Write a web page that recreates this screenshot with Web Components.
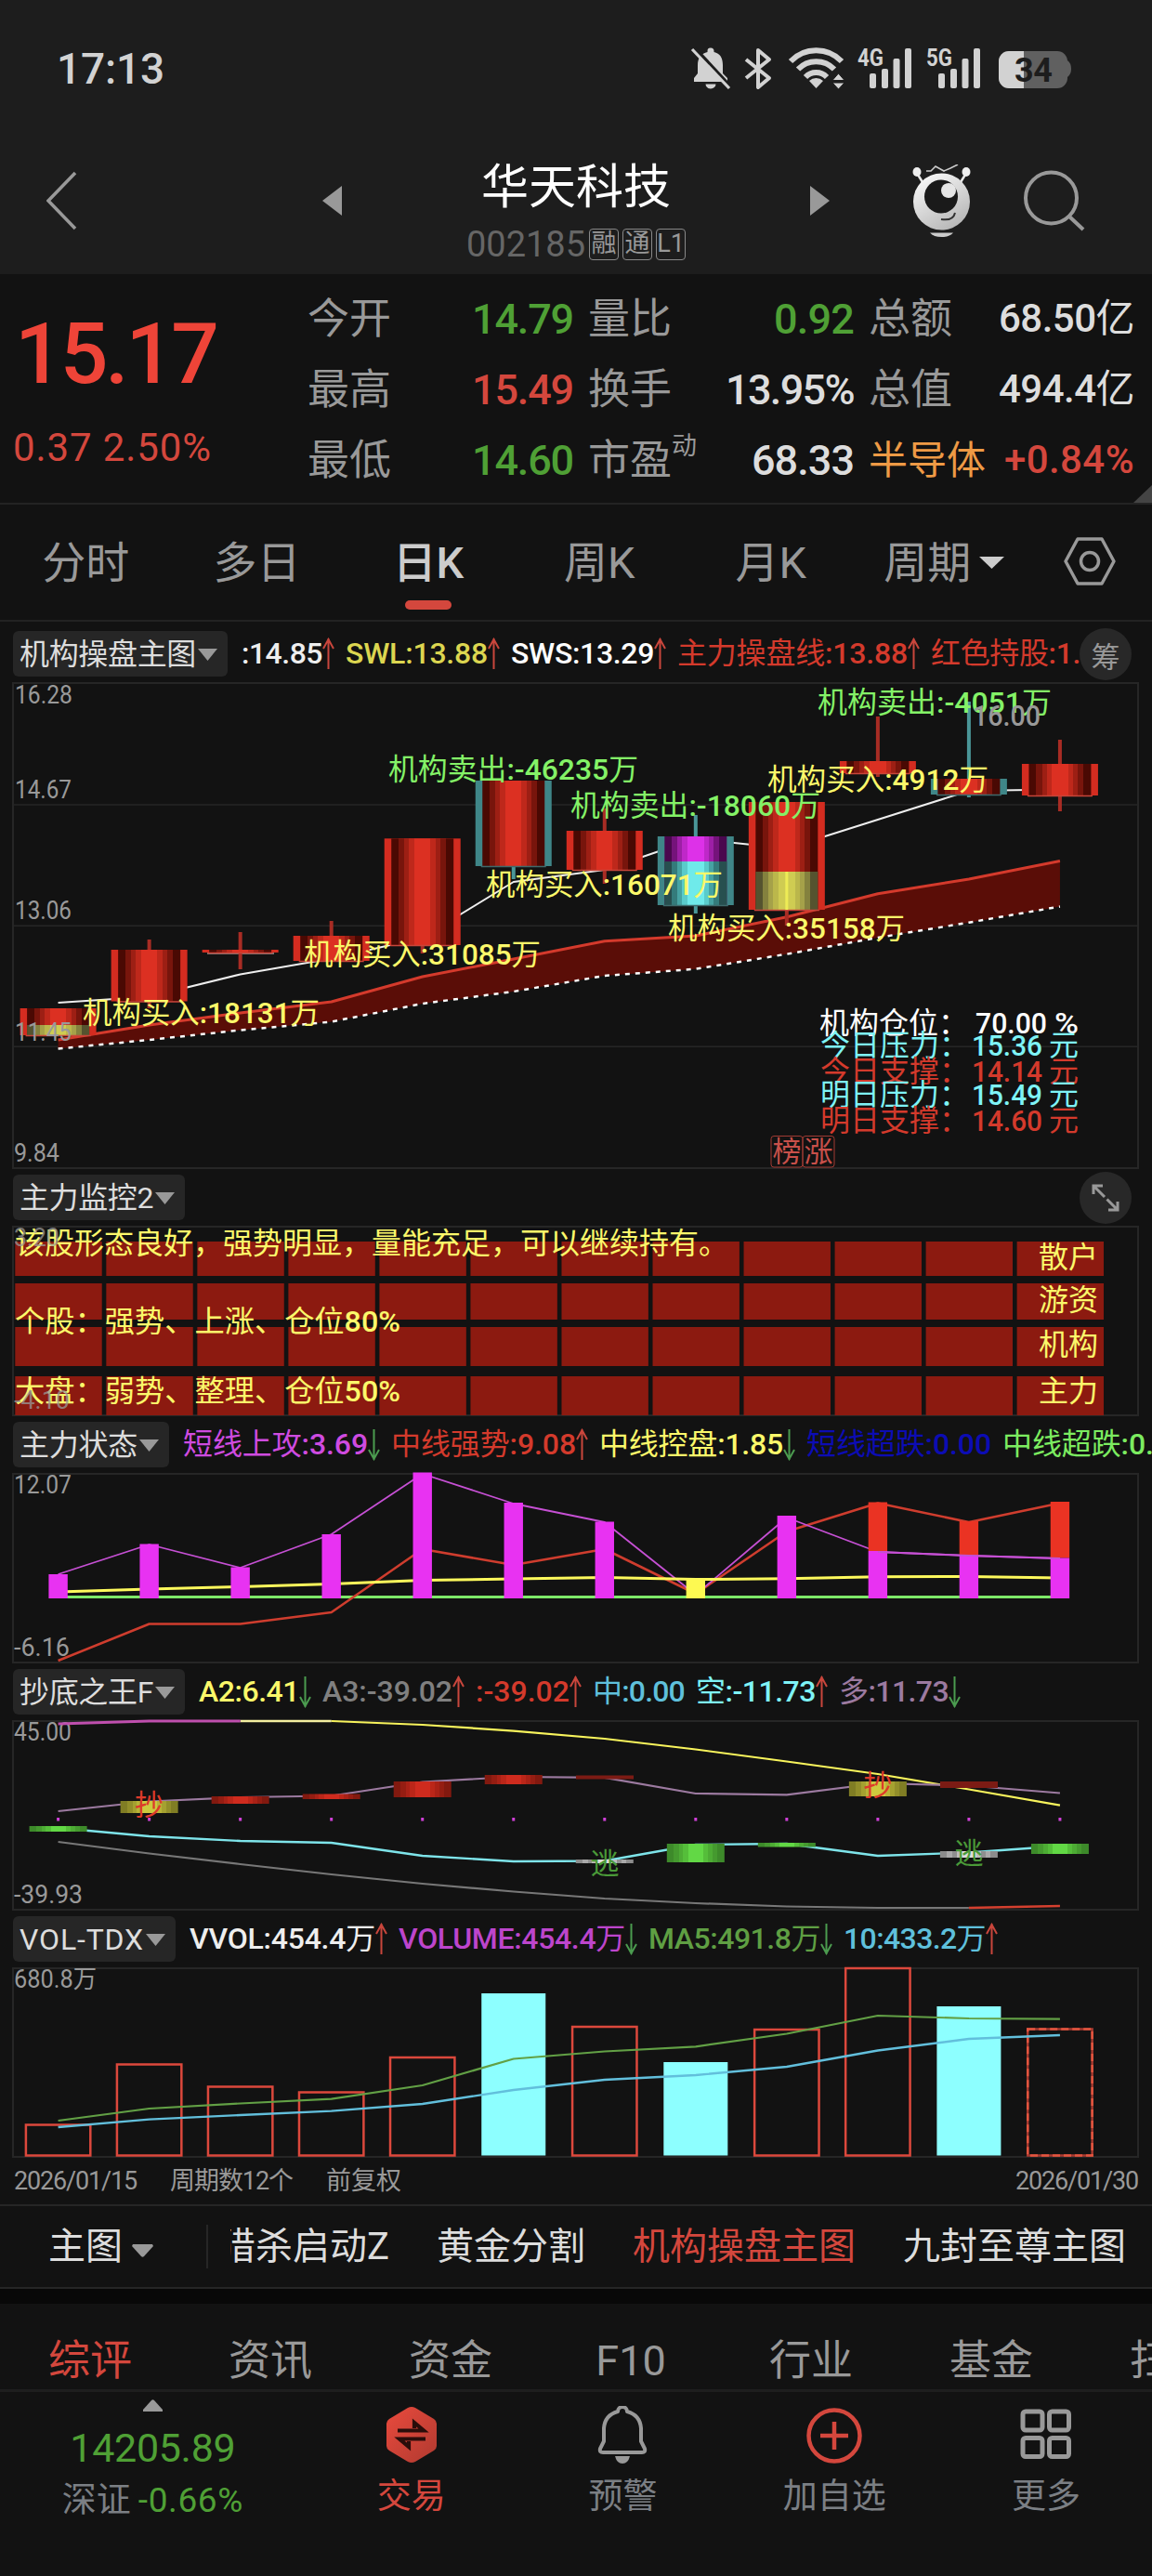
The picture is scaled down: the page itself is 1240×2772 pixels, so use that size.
<!DOCTYPE html>
<html lang="zh-CN">
<head>
<meta charset="utf-8">
<title>华天科技 002185</title>
<style>
    body {
        margin: 0;
        background: #121212;
        color: #ddd;
        font-family: Roboto, "Noto Sans CJK SC", sans-serif;
    }
</style>
</head>
<body>
<stock-app></stock-app>

<script>
const UP = "#d4473d";
const DOWN = "#4fa035";
const COL_X = Array.from({ length: 12 }, (_, i) => 62.6 + i * 98.03);

// ---------- text and svg helpers ----------
const HAN = /[\u3000-\u9fff\uff00-\uffef]+/g;
// digits are medium, Chinese runs stay regular
const light = (text, tag) => text.replace(HAN, s => `<${tag} style="font-weight:400">${s}</${tag}>`);
const rect = (x, y, w, h, fill, extra = "") =>
    `<rect x="${x}" y="${y}" width="${w}" height="${h}" fill="${fill}" ${extra}/>`;
const seg = (x1, y1, x2, y2, color, w = 1, extra = "") =>
    `<line x1="${x1}" y1="${y1}" x2="${x2}" y2="${y2}" stroke="${color}" stroke-width="${w}" ${extra}/>`;
const label = (x, y, text, color, size = 32, w = 0, weight = 500) =>
    `<text x="${x}" y="${y}" fill="${color}" font-size="${size}" font-weight="${weight}" ${w ? `textLength="${w}" lengthAdjust="spacingAndGlyphs"` : ""}>${light(text, "tspan")}</text>`;
const axis = (x, y, text, w) => label(x, y, text, "#999", 27, w, 400);
const path = (ys, color, w, extra = "", from = 0) =>
    `<polyline fill="none" stroke="${color}" stroke-width="${w}" stroke-linejoin="round" points="${ys.map((y, i) => `${COL_X[i + from]},${y}`).join(" ")}" ${extra}/>`;

// stepped gradient, dark at both edges and bright in the middle
function stepped(id, colors) {
    const cuts = [0, .12, .21, .285, .37, .63, .715, .79, .88, 1];
    const order = [0, 1, 2, 3, 4, 3, 2, 1, 0];
    const stops = order.map((c, i) =>
        `<stop offset="${cuts[i]}" stop-color="${colors[c]}"/><stop offset="${cuts[i + 1]}" stop-color="${colors[c]}"/>`);
    return `<linearGradient id="${id}">${stops.join("")}</linearGradient>`;
}

// ---------- text that fills a given width ----------
class FitText extends HTMLElement {
    constructor() {
        super();
        this.shadowDOM = this.attachShadow({mode:"open"});
    }
    connectedCallback() {
        this.shadowDOM.innerHTML = `
        <style>
        :host { display: inline-block; white-space: nowrap; }
        </style><span><slot></slot></span>`;
        const want = Number(this.getAttribute("w"));
        const span = this.shadowDOM.querySelector("span");
        const n = this.textContent.length;
        const have = span.getBoundingClientRect().width;
        if (want && have) {
            span.style.letterSpacing = ((want - have) / n).toFixed(3) + "px";
            this.style.width = want + "px";
        }
    }
}

// ---------- status bar ----------
class StatusBar extends HTMLElement {
    constructor() {
        super();
        this.shadowDOM = this.attachShadow({mode:"open"});
    }
    signal(kind) {
        return `<svg width="59" height="44" viewBox="0 0 59 44" fill="#d2d2d2">
            <text x="0" y="19" font-size="26" font-weight="700" textLength="28" lengthAdjust="spacingAndGlyphs">${kind}</text>
            <rect x="13" y="27" width="7" height="16" rx="2"/><rect x="26" y="22" width="7" height="21" rx="2"/>
            <rect x="38.500" y="11" width="7" height="32" rx="2"/><rect x="51" y="0" width="7" height="43" rx="2"/>
        </svg>`;
    }
    connectedCallback() {
        this.shadowDOM.innerHTML = `
        <style>
        :host { display: flex; align-items: center; height: 148px; box-sizing: border-box; padding: 0 87px 0 61px; }
        .time { flex: 1; font-size: 46px; font-weight: 500; color: #d2d2d2; }
        .icons { display: flex; }
        svg { display: block; overflow: visible; }
        </style>
        <div class="time"><fit-text w="116">17:13</fit-text></div>
        <div class="icons">
            <svg width="42" height="44" viewBox="0 0 42 44" fill="#d2d2d2" style="margin-right:15px">
                <path d="M3 36v-4l4-5V18C7 10 11 5.500 17.500 4V3a3.500 3.500 0 0 1 7 0v1C31 5.500 34 10 34 18v9l5 5v4z"/>
                <path d="M15.500 38.500h11a5.500 5 0 0 1-11 0z"/>
                <path d="M4 0 43 42" stroke="#1d1d1d" stroke-width="4"/>
                <path d="M1 1 41 43" stroke="#d2d2d2" stroke-width="3.200"/>
            </svg>
            <svg width="30" height="44" viewBox="0 0 30 44" fill="none" stroke="#d2d2d2" stroke-width="4" stroke-linejoin="round" style="margin-right:18px">
                <path d="M2 12 27 32 15 42V2l12 10L2 32"/>
            </svg>
            <svg width="60" height="44" viewBox="0 0 60 44" fill="none" stroke="#d2d2d2" stroke-width="6" style="margin-right:14px">
                <path d="M2 14a38 38 0 0 1 55 0M10 22.500a27 27 0 0 1 39 0M18 31a16 16 0 0 1 23 0"/>
                <path d="M29.500 43 22 35a11 11 0 0 1 15 0z" fill="#d2d2d2" stroke="none"/>
                <path d="M47 34.500h13L53.500 27zM47 37h13l-6.500 7z" fill="#d2d2d2" stroke="#1d1d1d" stroke-width="1"/>
            </svg>
            <div style="margin-right:15px">${this.signal("4G")}</div>
            <div style="margin-right:18px">${this.signal("5G")}</div>
            <svg width="79" height="44" viewBox="0 0 79 44">
                <path d="M75 13q4 3 4 9t-4 9z" fill="#606060"/>
                <rect x="1" y="3" width="74" height="40" rx="11" fill="#606060"/>
                <path d="M12 3h16v40H12A11 11 0 0 1 1 32V14A11 11 0 0 1 12 3z" fill="#d2d2d2"/>
                <text x="18" y="36" font-size="36" font-weight="700" fill="#1d1d1d" textLength="41">34</text>
            </svg>
        </div>`;
    }
}

// ---------- title bar ----------
class StockHeader extends HTMLElement {
    constructor() {
        super();
        this.shadowDOM = this.attachShadow({mode:"open"});
    }
    connectedCallback() {
        this.shadowDOM.innerHTML = `
        <style>
        :host { display: flex; align-items: center; height: 147px; }
        svg { display: block; flex: none; margin-top: -11px; }
        .name { width: 504px; text-align: center; align-self: flex-start; margin-top: 26px; }
        .title { font-size: 51px; line-height: 56px; color: #fff; }
        .code { display: flex; justify-content: center; align-items: center; gap: 4px; height: 34px; margin-top: 16px; font-size: 38px; color: #666; }
        .tag { box-sizing: border-box; width: 32px; height: 34px; border: 1px solid #888; border-radius: 4px; font-size: 27px; line-height: 31px; color: #999; }
        </style>
        <svg style="margin-left:50px" width="33" height="64" viewBox="0 0 33 64"><path d="M31 2 2 32l29 30" fill="none" stroke="#999" stroke-width="3.500"/></svg>
        <svg style="margin-left:264px" width="21" height="34" viewBox="0 0 21 34"><path d="M21 1v32L0 17z" fill="#999"/></svg>
        <div class="name">
            <div class="title">华天科技</div>
            <div class="code"><fit-text w="128">002185</fit-text><span class="tag">融</span><span class="tag">通</span><span class="tag">L1</span></div>
        </div>
        <svg width="21" height="34" viewBox="0 0 21 34"><path d="M0 1v32l21-16z" fill="#999"/></svg>
        <svg style="margin-left:89px" width="63" height="78" viewBox="0 0 63 78">
            <defs><linearGradient id="m" x1="0" y1="0" x2=".6" y2="1"><stop offset="0" stop-color="#fff"/><stop offset="1" stop-color="#b9b9b9"/></linearGradient></defs>
            <path d="M6 11 11 19M57 11 52 19" stroke="#e8e8e8" stroke-width="2.500"/>
            <ellipse cx="5" cy="8" rx="4.500" ry="5" fill="#eee"/><ellipse cx="58" cy="8" rx="4.500" ry="5" fill="#eee"/>
            <path d="M15 7h5l5-5 9 5 7-3 8-4" fill="none" stroke="#ccc" stroke-width="1.600"/>
            <circle cx="31.500" cy="40" r="30.500" fill="url(#m)"/>
            <ellipse cx="31" cy="34.500" rx="18" ry="18" fill="#1a1a1a"/>
            <ellipse cx="39" cy="28" rx="8" ry="8" fill="#e6e6e6"/>
            <path d="M31 59q13 2 15-7" fill="none" stroke="#333" stroke-width="2"/>
            <path d="M19 73.500h25q-4 4.500-12.500 4.500T19 73.500z" fill="#ccc"/>
        </svg>
        <svg style="margin-left:57px" width="66" height="66" viewBox="0 0 66 66" fill="none" stroke="#999" stroke-width="4"><circle cx="29.500" cy="30" r="27.500"/><path d="M49 50 64 64"/></svg>`;
    }
}

// ---------- quote block ----------
class QuoteGroup extends HTMLElement {
    constructor() {
        super();
        this.shadowDOM = this.attachShadow({mode:"open"});
    }
    set rows(rows) {
        this.shadowDOM.innerHTML = `
        <style>
        :host { display: grid; grid-auto-rows: 76px; width: 286px; }
        div { display: flex; justify-content: space-between; align-items: center; line-height: 76px; white-space: nowrap; }
        .k { font-size: 45px; color: #999; }
        .v { font-size: 45px; font-weight: 500; }
        sup { font-size: 27px; line-height: 1; vertical-align: 22px; }
        </style>
        ${rows.map(([k, v, color, w, style]) => `
        <div><span class="k" style="${style || ""}">${k}</span><fit-text class="v" w="${w}" style="color:${color};${this.hasAttribute("small") ? "font-size:42px;margin-top:-3px" : ""}">${light(v, "span")}</fit-text></div>`).join("")}`;
    }
}

class QuoteBoard extends HTMLElement {
    constructor() {
        super();
        this.shadowDOM = this.attachShadow({mode:"open"});
    }
    connectedCallback() {
        this.shadowDOM.innerHTML = `
        <style>
        :host { display: flex; position: relative; height: 235px; padding-top: 11px; border-bottom: 2px solid #232323; }
        .last { width: 331px; color: #ee4438; }
        .price { font-size: 91px; font-weight: 500; line-height: 100px; padding: 25px 0 0 16px; }
        .chg { font-size: 42px; line-height: 50px; padding: 26px 0 0 14px; color: ${UP}; }
        quote-group + quote-group { margin-left: 16px; }
        .corner { position: absolute; right: 0; bottom: 0; width: 20px; height: 19px; background: #444; clip-path: polygon(100% 0, 100% 100%, 0 100%); }
        </style>
        <div class="last">
            <div class="price"><fit-text w="217">15.17</fit-text></div>
            <div class="chg"><fit-text w="214">0.37 2.50%</fit-text></div>
        </div>
        <quote-group></quote-group><quote-group></quote-group><quote-group small></quote-group>
        <div class="corner"></div>`;
        const [a, b, c] = this.shadowDOM.querySelectorAll("quote-group");
        a.rows = [["今开", "14.79", DOWN, 109], ["最高", "15.49", UP, 109], ["最低", "14.60", DOWN, 109]];
        b.rows = [["量比", "0.92", DOWN, 86], ["换手", "13.95%", "#ddd", 138], ["市盈<sup>动</sup>", "68.33", "#ddd", 110]];
        c.rows = [["总额", "68.50亿", "#ddd", 146], ["总值", "494.4亿", "#ddd", 146], ["半导体", "+0.84%", UP, 140, "color:#ee9a45;font-size:42px"]];
    }
}

// ---------- period tabs ----------
class PeriodTabs extends HTMLElement {
    constructor() {
        super();
        this.shadowDOM = this.attachShadow({mode:"open"});
    }
    connectedCallback() {
        this.shadowDOM.innerHTML = `
        <style>
        :host { display: flex; height: 124px; border-bottom: 2px solid #232323; font-size: 47px; color: #999; }
        .tab { width: 184.400px; height: 124px; display: flex; flex-direction: column; align-items: center; line-height: 125px; white-space: nowrap; }
        .on { color: #ccc; font-weight: 500; }
        .on::after { content: ""; width: 50px; height: 10px; border-radius: 5px; background: ${UP}; margin-top: -22px; flex: none; }
        .more { flex-direction: row; justify-content: center; gap: 9px; padding-left: 2px; }
        svg { display: block; }
        .cfg { margin: 35px 0 0 37px; }
        </style>
        <div class="tab">分时</div><div class="tab">多日</div><div class="tab on">日K</div><div class="tab">周K</div><div class="tab">月K</div>
        <div class="tab more">周期<svg width="27" height="13" viewBox="0 0 27 13"><path d="M0 0h27L13.500 13z" fill="#ccc"/></svg></div>
        <svg class="cfg" width="56" height="52" viewBox="0 0 56 52" fill="none" stroke="#999" stroke-width="3.500"><path d="M15 2h26l13 24-13 24H15L2 26z" stroke-linejoin="round"/><circle cx="28" cy="26" r="9.500"/></svg>`;
    }
}

// ---------- indicator panels ----------
class LegendItem extends HTMLElement {
    constructor() {
        super();
        this.shadowDOM = this.attachShadow({mode:"open"});
    }
    connectedCallback() {
        const dir = this.getAttribute("dir");
        const up = `<path d="M6.500 1v33M1 12 6.500 2 12 12" stroke="#c9463c"/>`;
        const down = `<path d="M6.500 1v33M1 23l5.500 10L12 23" stroke="#4b9b4f"/>`;
        this.shadowDOM.innerHTML = `
        <style>
        :host { display: flex; flex: none; align-items: center; color: ${this.getAttribute("color")}; font-size: 32px; font-weight: 500; line-height: 49px; margin-right: 12px; }
        svg { display: block; }
        </style>
        <fit-text w="${this.getAttribute("w")}">${light(this.getAttribute("text"), "span")}</fit-text>
        ${dir === "none" ? "" : `<svg width="13" height="35" viewBox="0 0 13 35" fill="none" stroke-width="2">${dir === "up" ? up : down}</svg>`}`;
    }
}

class IndicatorPanel extends HTMLElement {
    constructor() {
        super();
        this.shadowDOM = this.attachShadow({mode:"open"});
    }
    connectedCallback() {
        this.shadowDOM.innerHTML = `
        <style>
        :host { display: block; }
        .head { display: flex; align-items: center; height: 49px; margin: 0 0 7px 14px; overflow: hidden; }
        .pill { box-sizing: border-box; flex: none; width: ${this.getAttribute("pill")}px; height: 49px; margin-right: 15px; padding-left: 7px; display: flex; align-items: center; gap: 2px;
            border-radius: 6px; background: #262626; color: #ddd; font-size: 32px; line-height: 50px; white-space: nowrap; }
        svg { display: block; }
        </style>
        <div class="head">
            <div class="pill"><fit-text w="${this.getAttribute("tw")}">${this.getAttribute("name")}</fit-text><svg width="21" height="14" viewBox="0 0 21 14"><path d="M0 1h21L10.500 14z" fill="#999"/></svg></div>
            <slot name="legend"></slot>
        </div>
        <slot></slot>`;
    }
}

// Base for the plots: the viewBox keeps the page's vertical scale, one unit per pixel.
class PlotBase extends HTMLElement {
    constructor() {
        super();
        this.shadowDOM = this.attachShadow({mode:"open"});
    }
    connectedCallback() {
        const { top, height } = this;
        this.shadowDOM.innerHTML = `
        <style>
        :host { display: block; height: ${height}px; margin-bottom: 7px; }
        svg { display: block; overflow: visible; }
        </style>
        <svg width="1240" height="${height}" viewBox="0 ${top} 1240 ${height}">
            <rect x="14" y="${top}" width="1211" height="${height}" fill="none" stroke="#262626" stroke-width="2"/>
            ${this.draw()}
        </svg>`;
    }
}

class MainPlot extends PlotBase {
    get top() { return 735; }
    get height() { return 522; }
    candle(i, top, bottom, o) {
        const x = COL_X[i];
        const frame = o.teal ? "#3f8688" : "#d42c20";
        const wick = o.teal ? "#4a9698" : "#a82c24";
        let s = "";
        if (o.hi) s += seg(x, o.hi, x, top, wick, 4);
        if (o.lo) s += seg(x, bottom, x, o.lo, wick, 4);
        s += rect(x - 41, top, 82, bottom - top, frame);
        s += rect(x - 33.5, top, 67, bottom - top, `url(#${o.fill || "red"})`);
        if (o.split) s += rect(x - 33.5, o.split, 67, bottom - o.split, `url(#${o.fill2})`);
        s += seg(x - 35, bottom + .5, x + 35, bottom + .5, o.teal ? "#3f6a6b" : "#c8453a", 1.5);
        return s;
    }
    draw() {
        const red = [1119, 1103, 1090, 1078, 1051, 1032, 1012.7, 1007, 986.7, 961.7, 946, 926.5];
        const low = [1128.5, 1119, 1108.5, 1099.5, 1080, 1067, 1050, 1042.7, 1026.7, 1009, 992.7, 975.5];
        const area = red.map((y, i) => `${COL_X[i]},${y}`).concat(low.map((y, i) => `${COL_X[i]},${y}`).reverse()).join(" ");
        const G = "#84f267", Y = "#fbf86a", C = "#7ef3f6", R = "#d43a2c";
        const info = (y, k, v, u, c) => label(883, y, k, c) + label(1046, y, v, c, 32, 76) + label(1129, y, u, c);
        return `
        <defs>
            ${stepped("red", ["#4a0903", "#78150c", "#9d1f14", "#be281b", "#dc3022"])}
            ${stepped("yel", ["#55532f", "#84813e", "#a5a149", "#bbb74b", "#cfcc52"])}
            ${stepped("cya", ["#274f4f", "#347b7b", "#46a3a3", "#5acbcb", "#6feaea"])}
            ${stepped("mag", ["#4a084e", "#75137b", "#9d1fa6", "#bf28c9", "#dd31e8"])}
        </defs>
        ${[866, 996.3, 1126.3].map(y => seg(14, y, 1225, y, "#262626", 1.5)).join("")}
        <polygon points="${area}" fill="#5a0d07"/>
        ${path(low, "#fff", 2.5, 'stroke-dasharray="5 6"')}
        ${path([1079, 1072.5, 1048.5, 1031.5, 1009, 949, 936, 902.5, 913, 882, 851, 849.5], "#eee", 2)}
        ${path(red, "#d43a2c", 3)}
        ${this.candle(0, 1085, 1114, { split: 1103, fill2: "yel" })}
        ${this.candle(1, 1022, 1077.5, { hi: 1011, lo: 1085 })}
        ${seg(223, 1026, 295, 1026, "#999", 1.5)}
        ${this.candle(2, 1022, 1025, { hi: 1003, lo: 1043 })}
        ${this.candle(3, 1007, 1034, { hi: 991 })}
        ${this.candle(4, 902.3, 1017, { lo: 1026 })}
        ${this.candle(5, 840, 932, { teal: 1, lo: 946 })}
        ${this.candle(6, 894, 936, { hi: 870, lo: 951 })}
        ${this.candle(7, 900, 974, { teal: 1, hi: 877, lo: 983, fill: "mag", split: 927, fill2: "cya" })}
        ${this.candle(8, 863, 979, { lo: 996, split: 938, fill2: "yel" })}
        ${seg(COL_X[8], 938, COL_X[8], 979, "#eeec55", 3)}
        ${this.candle(9, 819, 832, { hi: 771, lo: 836 })}
        ${this.candle(10, 838, 855, { teal: 1, hi: 755, lo: 858 })}
        ${this.candle(11, 822, 856, { hi: 796, lo: 873 })}
        ${axis(16, 757, "16.28", 62)}${axis(16, 859, "14.67", 61)}${axis(16, 989, "13.06", 61)}${axis(16, 1120, "11.45", 61)}${axis(15, 1250, "9.84", 49)}
        ${label(418, 838.5, "机构卖出:-46235万", G, 32, 269)}
        ${label(880, 767, "机构卖出:-4051万", G, 32, 252)}
        ${label(614, 877.5, "机构卖出:-18060万", G, 32, 269)}
        ${label(826, 850, "机构买入:4912万", Y, 32, 238)}
        ${label(523, 963, "机构买入:16071万", Y, 32, 255)}
        ${label(719, 1010, "机构买入:35158万", Y, 32, 255)}
        ${label(327, 1037.7, "机构买入:31085万", Y, 32, 255)}
        ${label(89, 1100.7, "机构买入:18131万", Y, 32, 255)}
        ${label(1047, 781, "16.00", "#999", 32, 73)}
        ${label(882, 1112, "机构仓位：", "#fff")}${label(1050, 1112, "70.00", "#fff", 32, 77)}${label(1135, 1112, "%", "#fff", 32, 26)}
        ${info(1135.7, "今日压力：", "15.36", "元", C)}
        ${info(1163.7, "今日支撑：", "14.14", "元", R)}
        ${info(1189, "明日压力：", "15.49", "元", C)}
        ${info(1216.7, "明日支撑：", "14.60", "元", R)}
        <g fill="none" stroke="#a03a33"><rect x="830" y="1222.500" width="34" height="33.500" rx="3"/><rect x="864" y="1222.500" width="34" height="33.500" rx="3"/></g>
        ${label(831.5, 1250, "榜", "#c9504a", 31)}${label(865.5, 1250, "涨", "#c9504a", 31)}`;
    }
}

class WatchPlot extends PlotBase {
    get top() { return 1320; }
    get height() { return 203; }
    draw() {
        const Y = "#fbf86a";
        const rows = [[1336, 37], [1381, 39], [1428, 42], [1481, 42]];
        return `
        ${rows.map(([y, h]) => COL_X.map(x => rect(x - 46.3, y, 93.4, h, "#8c1a10")).join("")).join("")}
        ${label(16, 1348.5, "该股形态良好，强势明显，量能充足，可以继续持有。", Y)}
        ${label(16, 1433.3, "个股：强势、上涨、仓位80%", Y, 32, 415)}
        ${label(16, 1508, "大盘：弱势、整理、仓位50%", Y, 32, 415)}
        ${label(1118, 1364, "散户", Y)}${label(1118, 1409.5, "游资", Y)}${label(1118, 1458, "机构", Y)}${label(1118, 1507.5, "主力", Y)}
        <g opacity=".75">${axis(15, 1341, "3.20", 49)}${axis(15, 1515.6, "-4.10", 60)}</g>`;
    }
}

class StatePlot extends PlotBase {
    get top() { return 1586; }
    get height() { return 203; }
    draw() {
        const M = "#e832f2", base = 1720;
        const tops = [1694, 1661.5, 1686.5, 1651, 1584.5, 1617, 1637.5, 1699.5, 1631, 1669, 1673.5, 1676.5];
        const over = { 9: 1616.5, 10: 1637, 11: 1616 };
        return `
        ${axis(15, 1607, "12.07", 62)}${axis(15, 1782, "-6.16", 60)}
        ${seg(62, 1718.5, 1151, 1718.5, "#7ee868", 3)}
        ${path([1787, 1747.5, 1747.5, 1735, 1667, 1684, 1667, 1715, 1648, 1617.5, 1638, 1617.5], "#cf3d2e", 2.6)}
        ${path([1694, 1662, 1687, 1651, 1586, 1618, 1638, 1716, 1633, 1670, 1674, 1677], "#c650d4", 1.8)}
        ${path([1713, 1710, 1707.5, 1704.5, 1700.5, 1699, 1697.5, 1699.5, 1698.7, 1696.8, 1696.5, 1698], "#fdf95c", 3)}
        ${tops.map((y, i) => (over[i] ? rect(COL_X[i] - 10.2, over[i], 20.4, y - over[i], "#ea3323") : "") +
            rect(COL_X[i] - 10.2, y, 20.4, base - y, i === 7 ? "#fdf951" : M)).join("")}
        ${path([1670, 1674, 1677], "#c650d4", 2, "", 9)}`;
    }
}

class BottomPlot extends PlotBase {
    get top() { return 1852; }
    get height() { return 203; }
    draw() {
        const bar = (i, top, bottom, fill) => rect(COL_X[i] - 31, top, 62, bottom - top, `url(#${fill})`);
        return `
        <defs>
            ${stepped("r", ["#82190f", "#951d12", "#a92116", "#bb2619", "#cf2b1e"])}
            ${stepped("y", ["#807d24", "#928e2a", "#a5a130", "#b8b437", "#cdc93e"])}
            ${stepped("g", ["#3d8a2a", "#459a2f", "#4dac34", "#55be3a", "#62d845"])}
            ${stepped("w", ["#8c8c8c", "#a9a9a9", "#8f8f8f", "#bdbdbd", "#dcdcdc"])}
        </defs>
        ${axis(15, 1873, "45.00", 62)}${axis(15, 2048, "-39.93", 74)}
        ${path([1852, 1852, 1856, 1862.6, 1871, 1882.5, 1895.5, 1909, 1925.5, 1942.6].slice(1), "#f8f45c", 2.2, "", 3)}
        ${seg(COL_X[2], 1852, COL_X[3], 1852, "#f4efa0", 2.6)}
        ${path([1855, 1852, 1852], "#bf4fae", 2.8)}
        ${path([1949, 1938.5, 1934, 1932.5, 1917.5, 1912, 1912.8, 1930, 1931.3, 1919, 1921.5, 1929.5], "#9c7aa0", 2.2)}
        ${path([1967, 1976, 1981, 1983, 1997, 2003, 2002.5, 1985, 1984, 1997, 1993.5, 1986.5], "#7ee4ea", 2.4)}
        ${path([1982, 1994.5, 2006, 2017, 2027, 2035.5, 2043, 2048, 2051.5, 2053, 2053], "#777", 2.2)}
        ${path([2053, 2051], "#d4402f", 2.4, "", 10)}
        ${COL_X.map(x => rect(x - 1.5, 1956, 3, 3.5, "#d040d8")).join("")}
        ${bar(1, 1938, 1951, "y")}${bar(2, 1933, 1941, "r")}${bar(3, 1930.5, 1936, "r")}${bar(4, 1917, 1934, "r")}${bar(5, 1910, 1920, "r")}
        ${rect(620, 1910.5, 62, 4, "#7c1b14")}${bar(9, 1917, 1933, "y")}${rect(1012, 1917, 62, 7, "#7c1b14")}
        ${bar(0, 1965, 1971, "g")}${bar(7, 1984, 2004, "g")}${bar(8, 1983, 1987.5, "g")}${bar(11, 1984, 1995, "g")}
        ${bar(6, 2001, 2005, "w")}${bar(10, 1992, 1999, "w")}
        ${label(145, 1953, "抄", "#dd3a2a", 31)}${label(929.5, 1932, "抄", "#dd3a2a", 31)}
        ${label(635.5, 2016, "逃", "#4a9a38", 31)}${label(1027.5, 2005, "逃", "#4a9a38", 31)}`;
    }
}

class VolumePlot extends PlotBase {
    get top() { return 2118; }
    get height() { return 203; }
    draw() {
        const tops = [2286.5, 2221.5, 2245.5, 2251.5, 2214, 2145, 2181, 2219, 2184, 2118, 2159, 2183.5];
        const bars = tops.map((y, i) => {
            const x = COL_X[i];
            if ([5, 7, 10].includes(i)) return rect(x - 34.5, y, 69, 2319.5 - y, "#8dffff");
            const box = extra => rect(x - 34.7, y, 69.4, 2319.5 - y, "none", `stroke-width="2.500" ${extra}`);
            // the running day is drawn with a faint dash over its outline
            return i === 11 ? box('stroke="#a83a30"') + box('stroke="#e2553f" stroke-dasharray="8 4"') : box('stroke="#dc483c"');
        });
        return `
        ${axis(15, 2139, "680.8万", 89)}
        ${bars.join("")}
        ${path([2282, 2269, 2263.5, 2258.6, 2244, 2215.5, 2207.5, 2202.3, 2188.5, 2169, 2172, 2172.6], "#62a045", 2.2)}
        ${path([2289, 2280.6, 2276, 2271.6, 2264, 2249, 2238, 2233, 2224, 2206.5, 2194, 2190], "#62bfdc", 2.4)}`;
    }
}

// round button lying over a panel's header row
class RoundButton extends HTMLElement {
    constructor() {
        super();
        this.shadowDOM = this.attachShadow({mode:"open"});
    }
    connectedCallback() {
        this.shadowDOM.innerHTML = `
        <style>
        :host { position: absolute; right: 22px; width: 56px; height: 56px; border-radius: 50%; background: #282828; display: flex; align-items: center; justify-content: center; color: #999; font-size: 31px; }
        </style><slot></slot>`;
    }
}

// ---------- bottom strips ----------
class IndicatorStrip extends HTMLElement {
    constructor() {
        super();
        this.shadowDOM = this.attachShadow({mode:"open"});
    }
    connectedCallback() {
        this.shadowDOM.innerHTML = `
        <style>
        :host { display: flex; align-items: center; height: 87px; border-top: 2px solid #262626; border-bottom: 2px solid #262626; font-size: 40px; line-height: 89px; color: #ddd; white-space: nowrap; overflow: hidden; }
        .pick { width: 222px; box-sizing: border-box; padding-left: 52px; display: flex; align-items: center; gap: 10px; }
        .pick svg { margin-top: 8px; }
        .sep { width: 2px; height: 47px; background: #262626; }
        .list { flex: 1; margin-left: 24px; overflow: hidden; display: flex; gap: 51px; }
        .list span:first-child { margin-left: -13px; }
        .on { color: ${UP}; }
        </style>
        <div class="pick">主图<svg width="23" height="14" viewBox="0 0 23 14"><path d="M1 0h21l1 2L13 13q-1.500 1.500-3 0L0 2z" fill="#999"/></svg></div>
        <div class="sep"></div>
        <div class="list"><span>猎杀启动Z</span><span>黄金分割</span><span class="on">机构操盘主图</span><span>九封至尊主图</span></div>`;
    }
}

class InfoTabs extends HTMLElement {
    constructor() {
        super();
        this.shadowDOM = this.attachShadow({mode:"open"});
    }
    connectedCallback() {
        this.shadowDOM.innerHTML = `
        <style>
        :host { display: flex; height: 92px; border-top: 16px solid #080808; border-bottom: 3px solid #1e1e1e; font-size: 45px; line-height: 123px; color: #999; overflow: hidden; white-space: nowrap; }
        span { width: 194px; flex: none; text-align: center; }
        .on { color: ${UP}; }
        </style>
        <span class="on">综评</span><span>资讯</span><span>资金</span><span>F10</span><span>行业</span><span>基金</span><span>扫雷</span>`;
    }
}

class NavButton extends HTMLElement {
    constructor() {
        super();
        this.shadowDOM = this.attachShadow({mode:"open"});
    }
    connectedCallback() {
        this.shadowDOM.innerHTML = `
        <style>
        :host { display: flex; flex-direction: column; align-items: center; width: 228px; padding-top: 15px; font-size: 37px; line-height: 46px; color: #7b7f84; }
        .icon { height: 75px; }
        ::slotted(svg) { display: block; }
        :host([on]) { color: ${UP}; }
        </style>
        <div class="icon"><slot></slot></div><div>${this.getAttribute("text")}</div>`;
    }
}

class BottomNav extends HTMLElement {
    constructor() {
        super();
        this.shadowDOM = this.attachShadow({mode:"open"});
    }
    connectedCallback() {
        this.shadowDOM.innerHTML = `
        <style>
        :host { display: flex; height: 198px; }
        .index { width: 329px; box-sizing: border-box; display: flex; flex-direction: column; align-items: center; color: ${DOWN}; }
        .index svg { margin: 8px 0 0; }
        .value { font-size: 43px; line-height: 50px; margin-top: 14px; }
        .pct { font-size: 37px; line-height: 46px; margin-top: 9px; display: flex; gap: 8px; }
        .pct span { color: #7b7f84; }
        </style>
        <div class="index">
            <svg width="21" height="13" viewBox="0 0 21 13"><path d="M0 13v-2L9 1q1.500-1.500 3 0l9 10v2z" fill="#999"/></svg>
            <div class="value"><fit-text w="178">14205.89</fit-text></div>
            <div class="pct"><span>深证</span><fit-text w="113">-0.66%</fit-text></div>
        </div>
        <nav-button text="交易" on>
            <svg width="56" height="62" viewBox="0 0 56 62">
                <defs><linearGradient id="h" x1="0" y1="0" x2="1" y2="1"><stop offset="0" stop-color="#ea4a3d"/><stop offset="1" stop-color="#b03a30"/></linearGradient></defs>
                <path d="M24 2q4-2 8 0l20 12q3 2 3 5v24q0 3-3 5L32 60q-4 2-8 0L4 48q-3-2-3-5V19q0-3 3-5z" fill="url(#h)"/>
                <path d="M13 26.500h28L31 18v6M43 35.500H15L25 44v-6" fill="none" stroke="#2a0d0a" stroke-width="4.200"/>
            </svg>
        </nav-button>
        <nav-button text="预警">
            <svg width="54" height="62" viewBox="0 0 54 62" fill="none" stroke="#999" stroke-width="4">
                <path d="M22 6a5 5 0 0 1 10 0q14 4 15 18v14l4 8q1 4-3 4H6q-4 0-3-4l4-8V24Q8 10 22 6z" stroke-linejoin="round"/>
                <path d="M19 54h16q-2 8-8 8t-8-8z" fill="#999" stroke="none"/>
            </svg>
        </nav-button>
        <nav-button text="加自选">
            <svg width="62" height="62" viewBox="0 0 62 62" fill="none" stroke="#d4473d" stroke-width="4.500"><circle cx="31" cy="32" r="27.500"/><path d="M16 32h30M31 17v30"/></svg>
        </nav-button>
        <nav-button text="更多">
            <svg width="56" height="62" viewBox="0 0 56 62" fill="none" stroke="#999" stroke-width="5">
                <rect x="3" y="6" width="21" height="20" rx="3"/><rect x="31.500" y="6" width="21" height="20" rx="3"/>
                <rect x="3" y="34.500" width="21" height="20" rx="3"/><rect x="31.500" y="34.500" width="21" height="20" rx="3"/>
            </svg>
        </nav-button>`;
    }
}

// ---------- page ----------
class StockApp extends HTMLElement {
    constructor() {
        super();
        this.shadowDOM = this.attachShadow({mode:"open"});
    }
    connectedCallback() {
        this.shadowDOM.innerHTML = `
        <style>
        :host { display: block; width: 1240px; height: 2772px; overflow: hidden; background: #121212; }
        header { background: #1d1d1d; height: 295px; }
        .charts { box-sizing: border-box; padding-top: 10px; height: 1703px; position: relative; }
        .dates { display: flex; gap: 36px; height: 37px; padding: 0 15px; font-size: 27px; line-height: 39px; color: #999; }
        .dates :last-child { margin-left: auto; }
        </style>
        <header><status-bar></status-bar><stock-header></stock-header></header>
        <quote-board></quote-board>
        <period-tabs></period-tabs>
        <div class="charts">
            <indicator-panel name="机构操盘主图" pill="231" tw="190">
                <legend-item slot="legend" text=":14.85" color="#eee" w="87" dir="up"></legend-item>
                <legend-item slot="legend" text="SWL:13.88" color="#dcd650" w="153" dir="up"></legend-item>
                <legend-item slot="legend" text="SWS:13.29" color="#fff" w="154" dir="up"></legend-item>
                <legend-item slot="legend" text="主力操盘线:13.88" color="#d43a2c" w="248" dir="up"></legend-item>
                <legend-item slot="legend" text="红色持股:1." color="#d43a2c" w="161" dir="none"></legend-item>
                <main-plot></main-plot>
            </indicator-panel>
            <indicator-panel name="主力监控2" pill="185" tw="144"><watch-plot></watch-plot></indicator-panel>
            <indicator-panel name="主力状态" pill="168" tw="127">
                <legend-item slot="legend" text="短线上攻:3.69" color="#cf4be0" w="199" dir="down"></legend-item>
                <legend-item slot="legend" text="中线强势:9.08" color="#d43a2c" w="199" dir="up"></legend-item>
                <legend-item slot="legend" text="中线控盘:1.85" color="#fbf86a" w="198" dir="down"></legend-item>
                <legend-item slot="legend" text="短线超跌:0.00" color="#0c0cb4" w="199" dir="none"></legend-item>
                <legend-item slot="legend" text="中线超跌:0.00" color="#7cec60" w="199" dir="none"></legend-item>
                <state-plot></state-plot>
            </indicator-panel>
            <indicator-panel name="抄底之王F" pill="185" tw="144">
                <legend-item slot="legend" text="A2:6.41" color="#fbf86a" w="108" dir="down"></legend-item>
                <legend-item slot="legend" text="A3:-39.02" color="#808080" w="140" dir="up"></legend-item>
                <legend-item slot="legend" text=":-39.02" color="#d43a2c" w="101" dir="up"></legend-item>
                <legend-item slot="legend" text="中:0.00" color="#5fc0dc" w="99" dir="none"></legend-item>
                <legend-item slot="legend" text="空:-11.73" color="#7ef3f6" w="129" dir="up"></legend-item>
                <legend-item slot="legend" text="多:11.73" color="#9c7aa0" w="118" dir="down"></legend-item>
                <bottom-plot></bottom-plot>
            </indicator-panel>
            <indicator-panel name="VOL-TDX" pill="175" tw="134">
                <legend-item slot="legend" text="VVOL:454.4万" color="#eee" w="200" dir="up"></legend-item>
                <legend-item slot="legend" text="VOLUME:454.4万" color="#bd45cc" w="244" dir="down"></legend-item>
                <legend-item slot="legend" text="MA5:491.8万" color="#5f9f43" w="185" dir="down"></legend-item>
                <legend-item slot="legend" text="10:433.2万" color="#5fc0dc" w="153" dir="up"></legend-item>
                <volume-plot></volume-plot>
            </indicator-panel>
            <div class="dates"><fit-text w="132">2026/01/15</fit-text><fit-text w="132">周期数12个</fit-text><span>前复权</span><fit-text w="132">2026/01/30</fit-text></div>
            <round-button style="top:7px">筹</round-button>
            <round-button style="top:592px">
                <svg width="30" height="30" viewBox="0 0 30 30" fill="none" stroke="#999" stroke-width="3"><path d="M2 11V2h10M2 2l12 12M28 19v9H18M28 28 16.500 16.500"/></svg>
            </round-button>
        </div>
        <indicator-strip></indicator-strip>
        <info-tabs></info-tabs>
        <bottom-nav></bottom-nav>`;
    }
}

customElements.define("fit-text", FitText);
customElements.define("status-bar", StatusBar);
customElements.define("stock-header", StockHeader);
customElements.define("quote-group", QuoteGroup);
customElements.define("quote-board", QuoteBoard);
customElements.define("period-tabs", PeriodTabs);
customElements.define("legend-item", LegendItem);
customElements.define("indicator-panel", IndicatorPanel);
customElements.define("main-plot", MainPlot);
customElements.define("watch-plot", WatchPlot);
customElements.define("state-plot", StatePlot);
customElements.define("bottom-plot", BottomPlot);
customElements.define("volume-plot", VolumePlot);
customElements.define("round-button", RoundButton);
customElements.define("indicator-strip", IndicatorStrip);
customElements.define("info-tabs", InfoTabs);
customElements.define("nav-button", NavButton);
customElements.define("bottom-nav", BottomNav);
customElements.define("stock-app", StockApp);
</script>
</body>
</html>
